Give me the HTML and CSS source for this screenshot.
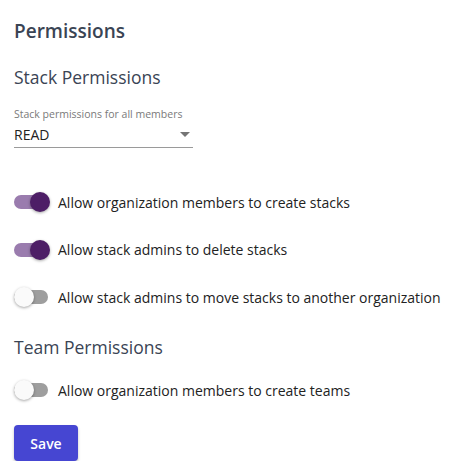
FILE: index.html
```html
<!DOCTYPE html>
<html>
<head>
<meta charset="utf-8">
<link rel="stylesheet" href="styles.css">
</head>
<body>
<div class="page">
  <h1 class="title">Permissions</h1>
  <h2 class="section">Stack Permissions</h2>
  <div class="field">
    <div class="field-label">Stack permissions for all members</div>
    <div class="select">
      <span class="select-value">READ</span>
      <span class="caret"></span>
    </div>
  </div>
  <div class="toggles">
    <div class="toggle-row">
      <span class="switch on"><span class="track"></span><span class="thumb"></span></span>
      <span class="toggle-text">Allow organization members to create stacks</span>
    </div>
    <div class="toggle-row">
      <span class="switch on"><span class="track"></span><span class="thumb"></span></span>
      <span class="toggle-text">Allow stack admins to delete stacks</span>
    </div>
    <div class="toggle-row">
      <span class="switch"><span class="track"></span><span class="thumb"></span></span>
      <span class="toggle-text">Allow stack admins to move stacks to another organization</span>
    </div>
  </div>
  <h2 class="section team">Team Permissions</h2>
  <div class="toggle-row single">
    <span class="switch"><span class="track"></span><span class="thumb"></span></span>
    <span class="toggle-text">Allow organization members to create teams</span>
  </div>
  <button class="save">Save</button>
</div>
</body>
</html>
```
FILE: styles.css
```css
html, body {
  margin: 0;
  padding: 0;
  background: #ffffff;
}
body {
  font-family: "Open Sans", "Noto Sans", sans-serif;
  color: #222222;
}
.page {
  padding: 18px 14px 0 14px;
  display: flex;
  flex-direction: column;
  align-items: flex-start;
}
.title {
  margin: 0;
  font-size: 19px;
  font-weight: 600;
  color: #3a4454;
  line-height: 26px;
}
.section {
  margin: 20px 0 0 0;
  font-size: 17.5px;
  font-weight: 400;
  color: #3a4454;
  line-height: 26px;
}
.field {
  margin-top: 17px;
  width: 179px;
}
.field-label {
  font-size: 10.5px;
  color: #7a7a7a;
  line-height: 14px;
}
.select {
  display: flex;
  align-items: center;
  justify-content: space-between;
  border-bottom: 1px solid #9a9a9a;
  height: 26px;
}
.select-value {
  font-size: 14px;
  color: #222;
}
.caret {
  width: 0;
  height: 0;
  border-left: 5px solid transparent;
  border-right: 5px solid transparent;
  border-top: 5px solid #757575;
  margin-right: 3px;
}
.toggles {
  margin-top: 42px;
  display: flex;
  flex-direction: column;
  gap: 23.5px;
}
.toggle-row {
  display: flex;
  align-items: center;
  height: 24px;
}
.toggle-row.single {
  margin-top: 18px;
}
.switch {
  position: relative;
  width: 34px;
  height: 20px;
  margin-right: 10px;
  flex: none;
}
.track {
  position: absolute;
  left: 0;
  top: 3px;
  width: 34px;
  height: 14px;
  border-radius: 7px;
  background: #9e9e9e;
}
.thumb {
  position: absolute;
  top: 0;
  left: 0;
  width: 20px;
  height: 20px;
  border-radius: 50%;
  background: #fafafa;
  box-shadow: 0 1px 3px rgba(0,0,0,0.35);
}
.switch.on .track {
  background: #9a7cae;
}
.switch.on .thumb {
  left: 16px;
  background: #4d1e66;
}
.toggle-text {
  font-size: 14px;
  color: #222;
}
.section.team {
  margin-top: 25px;
}
.save {
  margin-top: 23px;
  width: 64px;
  height: 36px;
  border: none;
  border-radius: 4px;
  background: #4646d2;
  color: #fff;
  font-family: "Open Sans", sans-serif;
  font-size: 14px;
  font-weight: 600;
  box-shadow: 0 2px 3px rgba(0,0,0,0.25);
  padding: 0;
}
```
